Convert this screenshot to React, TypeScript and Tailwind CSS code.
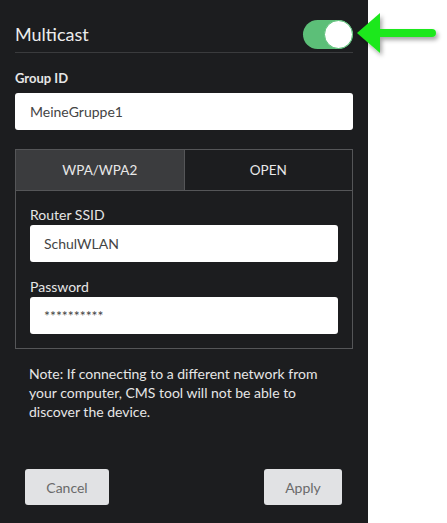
import * as React from "react";

function Toggle() {
  return (
    <div className="flex h-[29px] w-[50px] items-center justify-end rounded-full bg-[#5cbf78]">
      <div className="h-[29px] w-[29px] rounded-full border border-[#5cbf78] bg-white" />
    </div>
  );
}

function Field({ label, value }: { label: string; value: string }) {
  return (
    <div className="flex flex-col gap-[2px]">
      <span className="text-[14px] leading-4 text-[#e6e6e6]">{label}</span>
      <div className="flex h-[37px] items-center rounded-[3px] bg-white px-[14px] text-[14px] text-[#444]">
        {value}
      </div>
    </div>
  );
}

export default function App() {
  const [mode, setMode] = React.useState<"wpa" | "open">("wpa");

  return (
    <div className="relative flex h-[523px] w-[447px] bg-white" style={{ fontFamily: "Lato, 'Noto Sans', sans-serif" }}>
      <div className="flex h-full w-[368px] flex-col bg-[#1c1d1f] px-[15px]">
        <div className="mt-[20px] flex h-[29px] items-center justify-between">
          <span className="text-[18px] text-[#ececec]">Multicast</span>
          <Toggle />
        </div>
        <div className="mt-[3px] border-b border-[#3a3b3d]" />

        <div className="mt-[17px] flex flex-col">
          <span className="mb-[7px] text-[13px] font-bold leading-4 text-[#e6e6e6]">Group ID</span>
          <div className="flex h-[37px] items-center rounded-[3px] bg-white px-[15px] text-[14px] text-[#444]">
            MeineGruppe1
          </div>
        </div>

        <div className="mt-[19px] border border-[#555658]">
          <div className="flex h-[41px] border-b border-[#555658] text-[13.5px]">
            <button
              onClick={() => setMode("wpa")}
              className={`flex-1 border-r border-[#555658] text-[#e8e8e8] ${mode === "wpa" ? "bg-[#3b3c3e]" : "bg-[#1c1d1f]"}`}
            >
              WPA/WPA2
            </button>
            <button
              onClick={() => setMode("open")}
              className={`flex-1 text-[#e8e8e8] ${mode === "open" ? "bg-[#3b3c3e]" : "bg-[#1c1d1f]"}`}
            >
              OPEN
            </button>
          </div>
          <div className="flex flex-col gap-[17px] px-[14px] pb-[14px] pt-[16px]">
            <Field label="Router SSID" value="SchulWLAN" />
            <Field label="Password" value="**********" />
          </div>
        </div>

        <p className="mt-[15px] px-[14px] text-[14px] leading-[19px] text-[#e6e6e6]">
          Note: If connecting to a different network from your computer, CMS tool will not be able to discover the device.
        </p>

        <div className="mb-[18px] mt-auto flex justify-between pl-[10px] pr-[11px]">
          <button className="h-[36px] w-[84px] rounded-[3px] bg-[#e1e2e4] text-[14px] text-[#6a6a6a]">Cancel</button>
          <button className="h-[36px] w-[78px] rounded-[3px] bg-[#e1e2e4] text-[14px] text-[#6a6a6a]">Apply</button>
        </div>
      </div>

      <svg className="absolute left-[352px] top-[8px]" width="92" height="54" viewBox="0 0 92 54">
        <defs>
          <filter id="sh" x="-20%" y="-30%" width="150%" height="170%">
            <feDropShadow dx="2" dy="3" stdDeviation="2" floodColor="#000" floodOpacity="0.35" />
          </filter>
        </defs>
        <g filter="url(#sh)">
          <polygon points="5,25 28,5 28,45" fill="#1ee81e" />
          <line x1="26" y1="25" x2="80" y2="25" stroke="#1ee81e" strokeWidth="8" strokeLinecap="round" />
        </g>
      </svg>
    </div>
  );
}
